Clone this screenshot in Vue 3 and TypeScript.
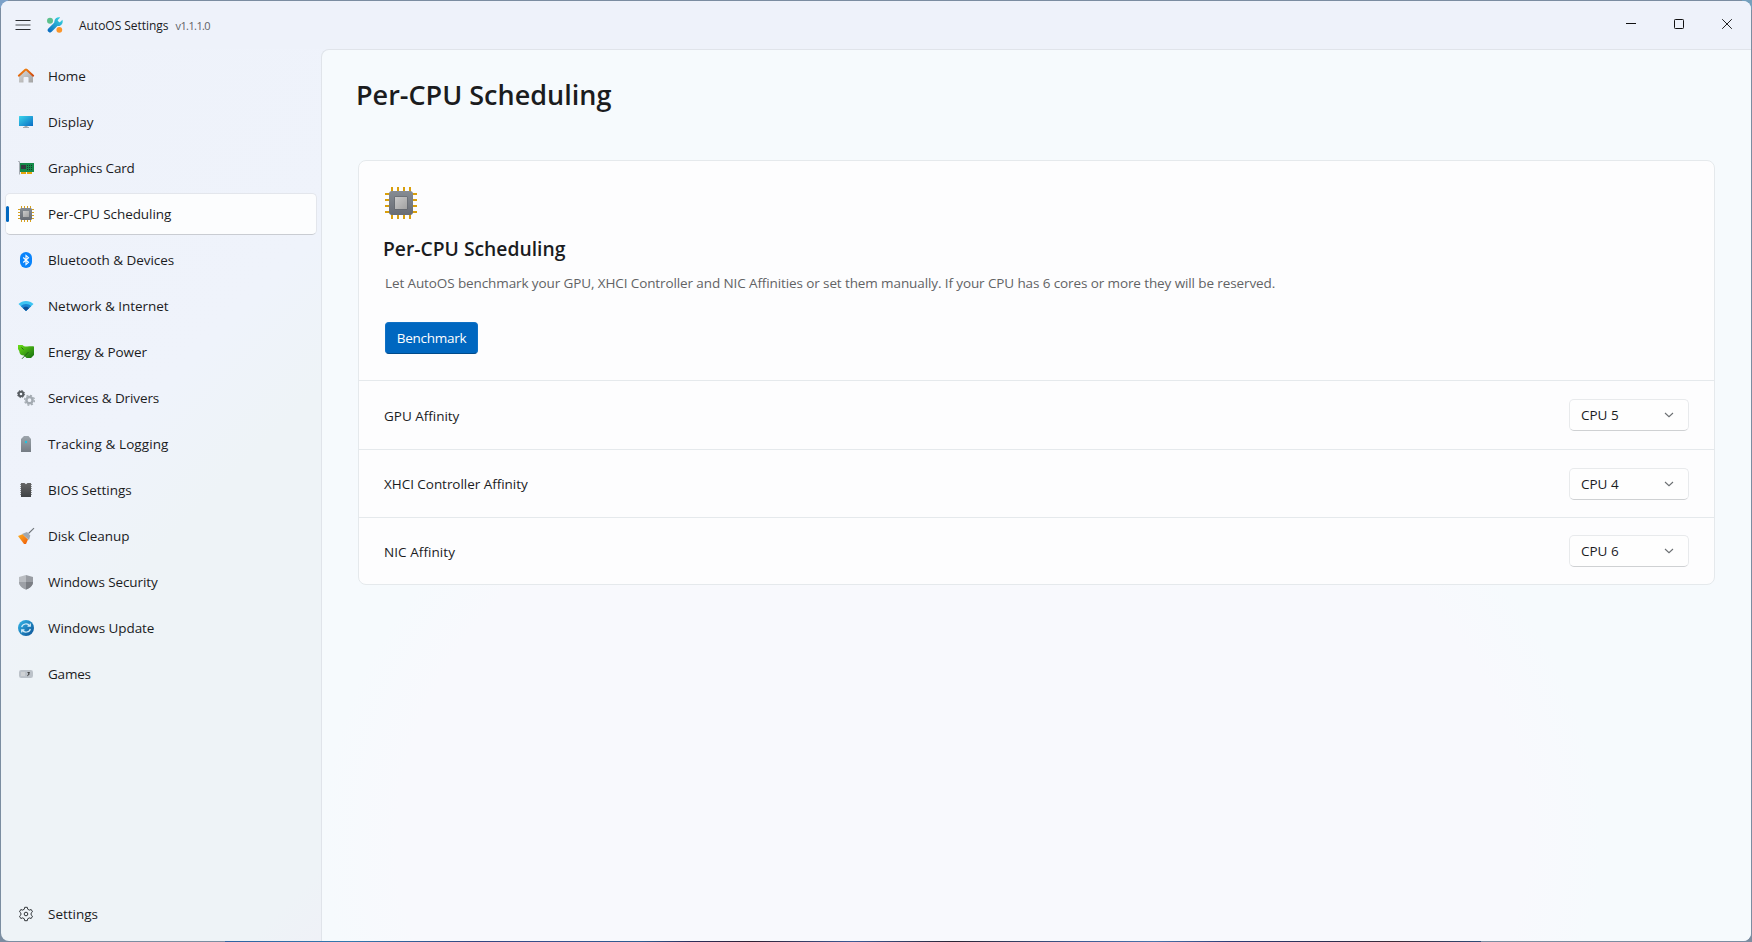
<script setup lang="ts">
import { ref } from 'vue'

interface NavItem {
  icon: string
  label: string
  tracking: number
}

interface Affinity {
  label: string
  value: string
  tracking: number
}

const navItems: NavItem[] = [
  { icon: 'home', label: 'Home', tracking: -0.1 },
  { icon: 'display', label: 'Display', tracking: 0 },
  { icon: 'gpu', label: 'Graphics Card', tracking: -0.18 },
  { icon: 'cpu', label: 'Per-CPU Scheduling', tracking: -0.05 },
  { icon: 'bluetooth', label: 'Bluetooth & Devices', tracking: -0.04 },
  { icon: 'network', label: 'Network & Internet', tracking: -0.04 },
  { icon: 'leaf', label: 'Energy & Power', tracking: -0.04 },
  { icon: 'gears', label: 'Services & Drivers', tracking: -0.1 },
  { icon: 'server', label: 'Tracking & Logging', tracking: 0.1 },
  { icon: 'chip', label: 'BIOS Settings', tracking: -0.02 },
  { icon: 'broom', label: 'Disk Cleanup', tracking: -0.06 },
  { icon: 'shield', label: 'Windows Security', tracking: -0.1 },
  { icon: 'update', label: 'Windows Update', tracking: -0.06 },
  { icon: 'games', label: 'Games', tracking: -0.2 },
]

const active = ref('cpu')

const affinities: Affinity[] = [
  { label: 'GPU Affinity', value: 'CPU 5', tracking: -0.02 },
  { label: 'XHCI Controller Affinity', value: 'CPU 4', tracking: -0.04 },
  { label: 'NIC Affinity', value: 'CPU 6', tracking: 0.06 },
]
</script>

<template>
  <div class="desktop">
    <svg class="defs" width="0" height="0" aria-hidden="true">
      <defs>
        <linearGradient id="g-roof" x1="0" y1="0" x2="1" y2="1"><stop offset="0" stop-color="#f58b10" /><stop offset="1" stop-color="#d04a10" /></linearGradient>
        <linearGradient id="g-wall" x1="0" y1="0" x2="1" y2="1"><stop offset="0" stop-color="#dcdcdc" /><stop offset="1" stop-color="#a2a2a2" /></linearGradient>
        <linearGradient id="g-screen" x1="0" y1="0" x2="1" y2="1"><stop offset="0" stop-color="#3ad6ec" /><stop offset="1" stop-color="#0a6cc4" /></linearGradient>
        <linearGradient id="g-cpu" x1="0" y1="0" x2="0" y2="1"><stop offset="0" stop-color="#868c93" /><stop offset="1" stop-color="#686c74" /></linearGradient>
        <linearGradient id="g-core" x1="0" y1="0" x2="1" y2="1"><stop offset="0" stop-color="#c9c9c9" /><stop offset="1" stop-color="#a2a2a2" /></linearGradient>
        <linearGradient id="g-leaf" x1="0" y1="0" x2="1" y2="1"><stop offset="0" stop-color="#6be016" /><stop offset="1" stop-color="#156d10" /></linearGradient>
        <linearGradient id="g-server" x1="0" y1="0" x2="0" y2="1"><stop offset="0" stop-color="#9da5ac" /><stop offset="1" stop-color="#757c84" /></linearGradient>
        <linearGradient id="g-chip" x1="0" y1="0" x2="0" y2="1"><stop offset="0" stop-color="#666" /><stop offset="1" stop-color="#3f4245" /></linearGradient>
        <linearGradient id="g-broom" x1="0" y1="0" x2="1" y2="1"><stop offset="0" stop-color="#fdb022" /><stop offset="1" stop-color="#ee5a0a" /></linearGradient>
        <linearGradient id="g-update" x1="0" y1="0" x2="1" y2="1"><stop offset="0" stop-color="#34b8ea" /><stop offset="1" stop-color="#0b4f94" /></linearGradient>
        <linearGradient id="g-wrench" gradientUnits="userSpaceOnUse" x1="13" y1="2" x2="3" y2="15"><stop offset="0" stop-color="#35cbdc" /><stop offset="1" stop-color="#0b6fc2" /></linearGradient>
      </defs>
    </svg>

    <div class="window">
      <header class="titlebar">
        <svg class="burger" width="16" height="16" viewBox="0 0 16 16">
          <path d="M0.5 3.5h15M0.5 12.5h15" stroke="#2b2d30" />
          <path d="M0.5 8h15" stroke="#4f5256" />
        </svg>
        <svg class="logo" width="16" height="16" viewBox="0 0 16 16">
          <circle cx="3" cy="3.800" r="3" fill="#5cc08c" />
          <path d="M3 13.200 10 6.200" stroke="url(#g-wrench)" stroke-width="4.600" stroke-linecap="round" />
          <path d="M13.200.6 10.800 3.100v2.100h2.100l2.500-2.400c1 2.600-.3 5.600-3 6.100-2.900.6-5.400-1.700-5-4.600C7.800 1.500 10.600-.3 13.200.6Z" fill="url(#g-wrench)" />
          <circle cx="12.300" cy="12.800" r="2.900" fill="#fb9528" />
        </svg>
        <span class="app-name">AutoOS Settings</span>
        <span class="version">v1.1.1.0</span>
        <div class="controls">
          <span class="control"><svg width="10" height="10" viewBox="0 0 10 10"><path d="M0 4.500h10" stroke="#111" /></svg></span>
          <span class="control"><svg width="10" height="10" viewBox="0 0 10 10"><rect x=".5" y=".5" width="9" height="9" rx=".8" fill="none" stroke="#111" /></svg></span>
          <span class="control"><svg width="10" height="10" viewBox="0 0 10 10"><path d="M.2.2l9.600 9.600M9.800.2.2 9.800" stroke="#222" /></svg></span>
        </div>
      </header>

      <div class="body">
        <nav class="sidebar">
          <ul class="nav-list">
            <li
              v-for="item in navItems"
              :key="item.icon"
              class="nav-item"
              :class="{ selected: item.icon === active }"
              @click="active = item.icon"
            >
              <svg class="nav-icon" width="18" height="18" viewBox="-1 -1 18 18">
                <template v-if="item.icon === 'home'">
                  <path d="M1 7.500 8 1.500 15 7.500V14.500h-4.500V10a1 1 0 0 0-1-1h-3a1 1 0 0 0-1 1v4.500H1Z" fill="url(#g-wall)" />
                  <path d="M.8 7.700 7.300 1.700Q8 1.100 8.700 1.700L15.200 7.700" fill="none" stroke="url(#g-roof)" stroke-width="1.900" stroke-linecap="round" />
                </template>
                <template v-else-if="item.icon === 'display'">
                  <path d="M6.500 11h3v2h1.500v1H5v-1h1.500Z" fill="#a3a9b0" />
                  <rect x="1" y="2" width="14" height="10" rx=".5" fill="url(#g-screen)" />
                </template>
                <template v-else-if="item.icon === 'gpu'">
                  <path d="M.2 1.500H1.500V14.500" fill="none" stroke="#a5abb2" />
                  <path d="M3 12h5v2H3zM9 12h5v2H9z" fill="#e5a50c" />
                  <rect x="2" y="3" width="14" height="9" fill="#148a4a" />
                  <rect x="3" y="5" width="5" height="4" fill="#333b40" />
                  <path d="M9 5.500h5M9 7.500h5M9 9.500h5" stroke="#173a2c" stroke-dasharray="1 1" />
                </template>
                <template v-else-if="item.icon === 'cpu'">
                  <path d="M3.500 0v16M6.500 0v16M9.500 0v16M12.500 0v16M0 3.500h16M0 6.500h16M0 9.500h16M0 12.500h16" stroke="#d6a01e" />
                  <rect x="2" y="2" width="12" height="12" rx="1.500" fill="url(#g-cpu)" />
                  <rect x="5" y="5" width="6" height="6" fill="url(#g-core)" />
                </template>
                <template v-else-if="item.icon === 'bluetooth'">
                  <rect x="2" y="0" width="12" height="16" rx="6" fill="#0a84fb" />
                  <path d="M5.200 5.500 10.500 10.300 8 12.600V3.400L10.500 5.700 5.200 10.500" fill="none" stroke="#fff" stroke-width="1.100" />
                </template>
                <template v-else-if="item.icon === 'network'">
                  <path d="M.5 6C4.500 2 11.500 2 15.500 6L8 13Z" fill="#3cc4f2" />
                  <path d="M2.800 8.200C5.500 5.300 10.500 5.300 13.200 8.200L8 13Z" fill="#1a86d2" />
                  <path d="M5 10.200C6.600 8.400 9.400 8.400 11 10.200L8 13Z" fill="#0c4f96" />
                </template>
                <template v-else-if="item.icon === 'leaf'">
                  <path d="M0 1h4.500L6 2.200C9 3 13 2 16 2.500V11l-3 3H8.500L6 11.500C3 11.500 1.500 10 1.200 7L0 5Z" fill="url(#g-leaf)" />
                  <path d="M4 14.800 10.500 8M3.500 3.500l2 2" fill="none" stroke="#1c5d14" stroke-width=".9" />
                </template>
                <template v-else-if="item.icon === 'gears'">
                  <circle cx="3" cy="4" r="2.300" fill="none" stroke="#575c61" stroke-width="2" />
                  <circle cx="3" cy="4" r="3.600" fill="none" stroke="#575c61" stroke-width="1" stroke-dasharray="1.400 1.430" />
                  <circle cx="11.500" cy="10.200" r="3.100" fill="none" stroke="#a3aab1" stroke-width="2.500" />
                  <circle cx="11.500" cy="10.200" r="4.900" fill="none" stroke="#a3aab1" stroke-width="1.300" stroke-dasharray="2 1.850" />
                </template>
                <template v-else-if="item.icon === 'server'">
                  <path d="M3 16V3L6 0h4.500L13 3v13Z" fill="url(#g-server)" />
                  <circle cx="8" cy="6" r="1.200" fill="#22c3de" />
                </template>
                <template v-else-if="item.icon === 'chip'">
                  <path d="M2.500 2v12M13.500 2v12" stroke="#9a9da0" stroke-dasharray="1 1" />
                  <path d="M3 1h3.500l1.500 1.200L9.500 1H13v14H3Z" fill="url(#g-chip)" />
                </template>
                <template v-else-if="item.icon === 'broom'">
                  <path d="M10.500 5.500 16 .2" stroke="#70757b" stroke-width="1.100" />
                  <path d="M4 6 9 4l3.300 3.500L11 12Z" fill="#a1a8b0" />
                  <path d="M0 8 4.500 6.300 10 11.500 8 16H6Z" fill="url(#g-broom)" />
                </template>
                <template v-else-if="item.icon === 'shield'">
                  <path d="M8 1 1 3v5c0 3.500 3 6 7 7.500Z" fill="#b9bcc1" />
                  <path d="M8 1l7 2v5c0 3.500-3 6-7 7.500Z" fill="#999ca2" />
                  <path d="M8 8h7c0 3.500-3 6-7 7.500Z" fill="#7b7e84" />
                  <path d="M1 8h7v7.500C4 14 1 11.500 1 8Z" fill="#9da0a6" />
                </template>
                <template v-else-if="item.icon === 'update'">
                  <circle cx="8" cy="8" r="8" fill="url(#g-update)" />
                  <path d="M3.700 7.200C4.300 3.700 9.500 2.600 11.800 5.800M12.300 3.400v2.800H9.500M12.300 8.800C11.700 12.300 6.500 13.400 4.200 10.200M3.700 12.600V9.800H6.500" fill="none" stroke="#d5edfa" stroke-width="1.200" />
                </template>
                <template v-else>
                  <rect x="1" y="4" width="14" height="8" rx="2.200" fill="#bcc2c9" />
                  <rect x="3" y="6" width="4" height="4" fill="#ced1d4" />
                  <path d="M9.500 6.500h2L10.300 8.200h1L9.300 9.800" fill="none" stroke="#333" stroke-width=".9" />
                </template>
              </svg>
              <span class="nav-label" :style="{ letterSpacing: item.tracking + 'px' }">{{ item.label }}</span>
            </li>
          </ul>
          <div class="nav-item">
            <svg class="nav-icon" width="18" height="18" viewBox="-1 -1 18 18" fill="none" stroke="#33373b">
              <path d="M6.700 1.300 6.300 3.200 4.700 4.100 2.800 3.500 1.500 5.800 2.900 7.100V8.900L1.500 10.200 2.800 12.500 4.700 11.900 6.300 12.800 6.700 14.700H9.300L9.700 12.800 11.300 11.900 13.200 12.500 14.500 10.200 13.100 8.900V7.100L14.500 5.800 13.200 3.500 11.300 4.100 9.700 3.200 9.300 1.300Z" stroke-linejoin="round" />
              <circle cx="8" cy="8" r="1.800" />
            </svg>
            <span class="nav-label">Settings</span>
          </div>
        </nav>

        <main class="content">
          <h1 class="page-title">Per-CPU Scheduling</h1>
          <section class="card">
            <div class="hero">
              <svg class="hero-icon" width="32" height="32" viewBox="0 0 32 32">
                <path d="M7 0v32M13 0v32M19 0v32M25 0v32M0 7h32M0 13h32M0 19h32M0 25h32" stroke="#d99f0c" stroke-width="2" />
                <rect x="4" y="4" width="24" height="24" rx="3" fill="url(#g-cpu)" />
                <rect x="9.500" y="9.500" width="13" height="13" rx=".5" fill="#5d6167" />
                <rect x="10" y="10" width="12" height="12" fill="url(#g-core)" />
              </svg>
              <h2 class="card-title">Per-CPU Scheduling</h2>
              <p class="description">Let AutoOS benchmark your GPU, XHCI Controller and NIC Affinities or set them manually. If your CPU has 6 cores or more they will be reserved.</p>
              <button class="benchmark" type="button">Benchmark</button>
            </div>
            <div v-for="row in affinities" :key="row.label" class="row">
              <span class="row-label" :style="{ letterSpacing: row.tracking + 'px' }">{{ row.label }}</span>
              <button class="combo" type="button">
                <span>{{ row.value }}</span>
                <svg width="10" height="6" viewBox="0 0 10 6"><path d="M1 1l4 3.700L9 1" fill="none" stroke="#6b6f72" stroke-width="1.100" /></svg>
              </button>
            </div>
          </section>
        </main>
      </div>
    </div>
  </div>
</template>

<style>
html,
body {
  margin: 0;
  overflow: hidden;
}
</style>

<style scoped>
.desktop {
  box-sizing: border-box;
  width: 1752px;
  height: 942px;
  padding: 1px;
  font-family: 'Open Sans', 'Noto Sans', sans-serif;
  font-size: 13.5px;
  color: #1b1c1e;
  background:
    linear-gradient(90deg, #2f62a0, #3478ae 10%, #33457f 20%, #37508c 26%, #2f5d92 33%, #2c2f5c 37%, #2f1f33 42%, #3d5a96 50%, #2a2333 58%, #3e5a92 68%, #4a73ab 74%, #2e3d75 80%, #2c2f50 88%, #3b2a38 93%, #2f4c78) 225px 941px / 1256px 1px no-repeat,
    linear-gradient(#74a0bd, #74a0bd) 1742px 0 / 10px 10px no-repeat,
    linear-gradient(#7ba1c8, #7ba1c8) 0 0 / 8px 8px no-repeat,
    #7b8da1;
}

.defs {
  position: absolute;
}

.window {
  display: flex;
  flex-direction: column;
  width: 1750px;
  height: 940px;
  overflow: hidden;
  border-radius: 8px;
  background: linear-gradient(135deg, #eef2fa 0, #eff3fb 390px, #eef3f7 500px, #eef3f7 840px, #eff1f7 890px, #eef2fa 1000px);
}

.titlebar {
  display: flex;
  flex: none;
  align-items: center;
  height: 48px;
  background: #eef2fa;
}

.burger {
  margin-left: 14px;
}

.logo {
  margin-left: 16px;
}

.app-name {
  margin-left: 16px;
  font-size: 12px;
  letter-spacing: -0.03px;
}

.version {
  margin-left: 7px;
  font-size: 11px;
  letter-spacing: -0.6px;
  color: #5e6165;
}

.controls {
  display: flex;
  align-self: flex-start;
  margin-left: auto;
}

.control {
  display: flex;
  align-items: center;
  justify-content: center;
  width: 48px;
  height: 46px;
}

.body {
  display: flex;
  flex: 1;
  min-height: 0;
}

.sidebar {
  box-sizing: border-box;
  display: flex;
  flex: none;
  flex-direction: column;
  justify-content: space-between;
  width: 320px;
  padding: 6px 4px 6px;
}

.nav-list {
  display: flex;
  flex-direction: column;
  gap: 4px;
  margin: 0;
  padding: 0;
  list-style: none;
}

.nav-item {
  position: relative;
  box-sizing: border-box;
  display: flex;
  align-items: center;
  height: 42px;
  padding-left: 11px;
  border: 1px solid transparent;
  border-radius: 5px;
}

.nav-item.selected {
  background: #fcfdfe;
  border-color: #e3e6ec;
  border-bottom-color: #c9ccd2;
}

.nav-item.selected::before {
  content: '';
  position: absolute;
  top: 12px;
  left: 0;
  width: 3px;
  height: 16px;
  border-radius: 2px;
  background: #0067c0;
}

.nav-label {
  margin-left: 13px;
  white-space: nowrap;
}

.content {
  box-sizing: border-box;
  flex: 1;
  min-width: 0;
  padding: 27px 36px 0;
  border-top: 1px solid #e0e4ea;
  border-left: 1px solid #e0e4ea;
  border-top-left-radius: 8px;
  background: radial-gradient(ellipse 640px 480px at 640px 790px, #f8f9fd 0, #f8f9fd 88%, #f6fafd 100%);
}

.page-title {
  margin: 0 0 0 -2px;
  height: 36px;
  font-size: 27px;
  font-weight: 600;
  line-height: 36px;
}

.card {
  box-sizing: border-box;
  height: 425px;
  margin-top: 47px;
  border: 1px solid #e5e9ec;
  border-radius: 8px;
  background: #fdfdfe;
}

.hero {
  box-sizing: border-box;
  height: 219px;
  padding: 26px 26px 0;
}

.hero-icon {
  display: block;
}

.card-title {
  margin: 16px 0 0 -2px;
  font-size: 19.3px;
  font-weight: 600;
  line-height: 28px;
}

.description {
  margin: 10px 0 0;
  letter-spacing: -0.107px;
  line-height: 20px;
  color: #626365;
}

.benchmark {
  width: 93px;
  height: 32px;
  margin-top: 29px;
  padding: 0;
  border: 1px solid #0f70c4;
  border-bottom-color: #004a8a;
  border-radius: 4px;
  background: #0067c0;
  color: #fff;
  font: inherit;
  letter-spacing: -0.28px;
}

.row {
  box-sizing: border-box;
  display: flex;
  align-items: center;
  justify-content: space-between;
  height: 68px;
  padding: 0 25px;
  border-top: 1px solid #e5e9ec;
}

.row:nth-of-type(2) {
  height: 69px;
}

.row:nth-of-type(2) .row-label {
  padding-top: 1px;
}

.row:last-child {
  height: 67px;
}

.row:last-child .row-label {
  padding-top: 1px;
}

.combo {
  box-sizing: border-box;
  display: flex;
  align-items: center;
  justify-content: space-between;
  width: 120px;
  height: 32px;
  padding: 0 14px 0 11px;
  border: 1px solid #e8eaec;
  border-bottom-color: #cfd1d3;
  border-radius: 5px;
  background: #fefefe;
  color: #1b1c1e;
  font: inherit;
}
</style>
